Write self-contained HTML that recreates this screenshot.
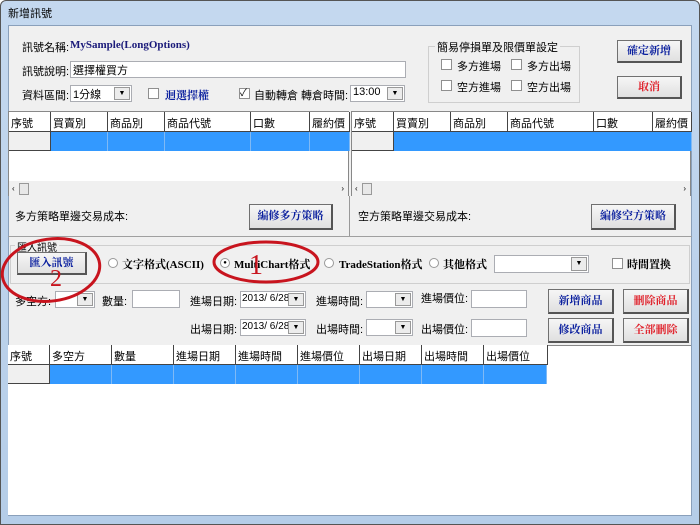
<!DOCTYPE html>
<html><head><meta charset="utf-8"><style>
*{margin:0;padding:0;box-sizing:border-box}
body{width:700px;height:525px;overflow:hidden;background:#fff;font-family:"Liberation Sans","Noto Sans CJK TC",sans-serif;font-size:11px;color:#000;position:relative}
.a{position:absolute;white-space:nowrap}
.frame{position:absolute;left:0;top:0;width:700px;height:525px;background:linear-gradient(#c4d8ef,#b5cde8);border:1px solid #555;border-radius:6px 6px 0 0}
.client{position:absolute;left:8px;top:25px;width:684px;height:491px;background:#f0f0f0;border:1px solid #8aa0bb}
.in{position:absolute;background:#fff;border:1px solid #abadb3}
.sel{position:absolute;background:#fff;border:1px solid #abadb3;overflow:hidden}
.sel:after{content:"▼";position:absolute;right:1px;top:1px;width:14px;bottom:1px;background:#ececec;border:1px solid #999;font-size:7px;text-align:center;line-height:12px}
.btn{position:absolute;background:linear-gradient(#f6f6f6,#e0e0e0);border:1px solid #707070;border-right:2px solid #555;border-bottom:2px solid #555;font-weight:bold;text-align:center;font-family:"Liberation Serif","Noto Serif CJK SC",serif;font-size:11px}
.blue{color:#0a1f9e}.red{color:#e0202a}
.cb{position:absolute;width:11px;height:11px;border:1px solid #8f8f8f;background:#fff}
.rd{position:absolute;width:10px;height:10px;border:1px solid #999;border-radius:50%;background:#fff}
.grid{position:absolute;background:#fff;border:1px solid #888}
.hc{position:absolute;top:0;height:20px;border-right:1px solid #444;border-bottom:1px solid #444;background:#fff;padding:3px 0 0 2px;font-size:11px;overflow:hidden;white-space:nowrap}
.bc{position:absolute;height:19px;background:#3399ff;border-right:1px solid #7fb9f5}
.gb{position:absolute;border:1px solid #cfcfcf}
.bs{font-weight:bold;font-family:"Liberation Serif","Noto Serif CJK SC",serif;font-size:11px}
</style></head><body>
<div class="frame"></div>
<div class="a" style="left:8px;top:5px;font-size:11px">新增訊號</div>
<div class="client"></div>

<div class="a" style="left:22px;top:39px">訊號名稱:</div>
<div class="a bs" style="left:70px;top:39px;color:#1a1a7a">MySample(LongOptions)</div>
<div class="a" style="left:22px;top:63px">訊號說明:</div>
<div class="in" style="left:70px;top:61px;width:336px;height:17px;padding-left:2px">選擇權買方</div>
<div class="a" style="left:22px;top:87px">資料區間:</div>
<div class="sel" style="left:70px;top:85px;width:62px;height:17px;padding-left:2px">1分線</div>
<div class="cb" style="left:148px;top:88px"></div>
<div class="a blue bs" style="left:165px;top:87px">迴選擇權</div>
<div class="cb" style="left:239px;top:88px;font-size:10px;line-height:9px">✓</div>
<div class="a" style="left:254px;top:87px">自動轉倉 轉倉時間:</div>
<div class="sel" style="left:350px;top:85px;width:55px;height:17px;padding-left:2px">13:00</div>

<div class="gb" style="left:428px;top:46px;width:152px;height:57px"></div>
<div class="a" style="left:435px;top:39px;background:#f0f0f0;padding:0 2px">簡易停損單及限價單設定</div>
<div class="cb" style="left:441px;top:59px"></div><div class="a" style="left:457px;top:58px">多方進場</div>
<div class="cb" style="left:511px;top:59px"></div><div class="a" style="left:527px;top:58px">多方出場</div>
<div class="cb" style="left:441px;top:80px"></div><div class="a" style="left:457px;top:79px">空方進場</div>
<div class="cb" style="left:511px;top:80px"></div><div class="a" style="left:527px;top:79px">空方出場</div>
<div class="btn blue" style="left:617px;top:40px;width:65px;height:23px;line-height:20px">確定新增</div>
<div class="btn red" style="left:617px;top:76px;width:65px;height:23px;line-height:20px">取消</div>

<div class="grid" style="left:8px;top:111px;width:341px;height:85px">
<div class="hc" style="left:0;width:42px">序號</div><div class="hc" style="left:42px;width:57px">買賣別</div><div class="hc" style="left:99px;width:57px">商品別</div><div class="hc" style="left:156px;width:86px">商品代號</div><div class="hc" style="left:242px;width:59px">口數</div><div class="hc" style="left:301px;width:40px">履約價</div>
<div style="position:absolute;left:0;top:20px;width:42px;height:19px;background:#f0f0f0;border-right:1px solid #444;border-bottom:1px solid #444"></div>
<div class="bc" style="left:42px;top:20px;width:57px"></div><div class="bc" style="left:99px;top:20px;width:57px"></div><div class="bc" style="left:156px;top:20px;width:86px"></div><div class="bc" style="left:242px;top:20px;width:59px"></div><div class="bc" style="left:301px;top:20px;width:40px"></div>
<div style="position:absolute;left:0;top:69px;width:339px;height:15px;background:#f0f0f0;font-size:8px;line-height:15px;padding-left:3px">‹<span style="display:inline-block;width:10px;height:12px;border:1px solid #999;background:#e8e8e8;vertical-align:middle;margin-left:4px"></span><span style="float:right;margin-right:4px">›</span></div>
</div>
<div class="grid" style="left:351px;top:111px;width:340px;height:85px">
<div class="hc" style="left:0;width:42px">序號</div><div class="hc" style="left:42px;width:57px">買賣別</div><div class="hc" style="left:99px;width:57px">商品別</div><div class="hc" style="left:156px;width:86px">商品代號</div><div class="hc" style="left:242px;width:59px">口數</div><div class="hc" style="left:301px;width:39px">履約價</div>
<div style="position:absolute;left:0;top:20px;width:42px;height:19px;background:#f0f0f0;border-right:1px solid #444;border-bottom:1px solid #444"></div>
<div class="bc" style="left:42px;top:20px;width:298px"></div>
<div style="position:absolute;left:0;top:69px;width:338px;height:15px;background:#f0f0f0;font-size:8px;line-height:15px;padding-left:3px">‹<span style="display:inline-block;width:10px;height:12px;border:1px solid #999;background:#e8e8e8;vertical-align:middle;margin-left:4px"></span><span style="float:right;margin-right:4px">›</span></div>
</div>
<div style="position:absolute;left:349px;top:196px;width:1px;height:40px;background:#999"></div>
<div class="a" style="left:15px;top:208px">多方策略單邊交易成本:</div>
<div class="btn blue" style="left:249px;top:204px;width:84px;height:26px;line-height:23px">編修多方策略</div>
<div class="a" style="left:358px;top:208px">空方策略單邊交易成本:</div>
<div class="btn blue" style="left:591px;top:204px;width:85px;height:26px;line-height:23px">編修空方策略</div>
<div style="position:absolute;left:8px;top:236px;width:684px;height:1px;background:#a0a0a0"></div>

<div class="gb" style="left:10px;top:245px;width:680px;height:39px"></div>
<div class="a" style="left:15px;top:239px;background:#f0f0f0;padding:0 2px;font-size:10px">匯入訊號</div>
<div class="btn blue" style="left:17px;top:252px;width:70px;height:23px;line-height:20px">匯入訊號</div>
<div class="rd" style="left:108px;top:258px"></div>
<div class="a bs" style="left:122px;top:256px">文字格式(ASCII)</div>
<div class="rd" style="left:220px;top:258px;font-size:6px;line-height:8px;text-align:center">●</div>
<div class="a bs" style="left:234px;top:256px">MultiChart格式</div>
<div class="rd" style="left:324px;top:258px"></div>
<div class="a bs" style="left:339px;top:256px">TradeStation格式</div>
<div class="rd" style="left:429px;top:258px"></div>
<div class="a bs" style="left:443px;top:256px">其他格式</div>
<div class="sel" style="left:494px;top:255px;width:95px;height:18px"></div>
<div class="cb" style="left:612px;top:258px"></div>
<div class="a bs" style="left:627px;top:256px">時間置換</div>

<div class="a" style="left:15px;top:293px">多空方:</div>
<div class="sel" style="left:55px;top:291px;width:40px;height:17px"></div>
<div class="a" style="left:102px;top:293px">數量:</div>
<div class="in" style="left:132px;top:290px;width:48px;height:18px"></div>
<div class="a" style="left:190px;top:293px">進場日期:</div>
<div class="sel" style="left:240px;top:291px;width:66px;height:17px;padding:1px 0 0 1px;font-size:10px">2013/ 6/28</div>
<div class="a" style="left:316px;top:293px">進場時間:</div>
<div class="sel" style="left:366px;top:291px;width:47px;height:17px"></div>
<div class="a" style="left:421px;top:290px">進場價位:</div>
<div class="in" style="left:471px;top:290px;width:56px;height:18px"></div>
<div class="btn blue" style="left:548px;top:289px;width:66px;height:25px;line-height:22px">新增商品</div>
<div class="btn red" style="left:623px;top:289px;width:66px;height:25px;line-height:22px">刪除商品</div>

<div class="a" style="left:190px;top:321px">出場日期:</div>
<div class="sel" style="left:240px;top:319px;width:66px;height:17px;padding:1px 0 0 1px;font-size:10px">2013/ 6/28</div>
<div class="a" style="left:316px;top:321px">出場時間:</div>
<div class="sel" style="left:366px;top:319px;width:47px;height:17px"></div>
<div class="a" style="left:421px;top:321px">出場價位:</div>
<div class="in" style="left:471px;top:319px;width:56px;height:18px"></div>
<div class="btn blue" style="left:548px;top:318px;width:66px;height:25px;line-height:22px">修改商品</div>
<div class="btn red" style="left:623px;top:318px;width:66px;height:25px;line-height:22px">全部刪除</div>

<div style="position:absolute;left:8px;top:345px;width:683px;height:170px;background:#fff;border-top:1px solid #888"></div>
<div style="position:absolute;left:8px;top:345px;width:540px;height:39px">
<div class="hc" style="left:0;width:42px">序號</div><div class="hc" style="left:42px;width:62px">多空方</div><div class="hc" style="left:104px;width:62px">數量</div><div class="hc" style="left:166px;width:62px">進場日期</div><div class="hc" style="left:228px;width:62px">進場時間</div><div class="hc" style="left:290px;width:62px">進場價位</div><div class="hc" style="left:352px;width:62px">出場日期</div><div class="hc" style="left:414px;width:62px">出場時間</div><div class="hc" style="left:476px;width:64px">出場價位</div>
<div style="position:absolute;left:0;top:20px;width:42px;height:19px;background:#f0f0f0;border-right:1px solid #444;border-bottom:1px solid #444"></div>
<div class="bc" style="left:42px;top:20px;width:62px"></div><div class="bc" style="left:104px;top:20px;width:62px"></div><div class="bc" style="left:166px;top:20px;width:62px"></div><div class="bc" style="left:228px;top:20px;width:62px"></div><div class="bc" style="left:290px;top:20px;width:62px"></div><div class="bc" style="left:352px;top:20px;width:62px"></div><div class="bc" style="left:414px;top:20px;width:62px"></div><div class="bc" style="left:476px;top:20px;width:63px"></div>
</div>

<svg style="position:absolute;left:0;top:0" width="700" height="525">
<ellipse cx="266" cy="262" rx="52" ry="20" fill="none" stroke="#c8141e" stroke-width="3"/>
<ellipse cx="51" cy="270" rx="49" ry="31" fill="none" stroke="#c8141e" stroke-width="3" transform="rotate(-8 51 270)"/>
<text x="249" y="274" font-family="Liberation Serif,serif" font-size="28" fill="#c8141e">1</text>
<text x="50" y="286" font-family="Liberation Serif,serif" font-size="24" fill="#c8141e">2</text>
</svg>
</body></html>
